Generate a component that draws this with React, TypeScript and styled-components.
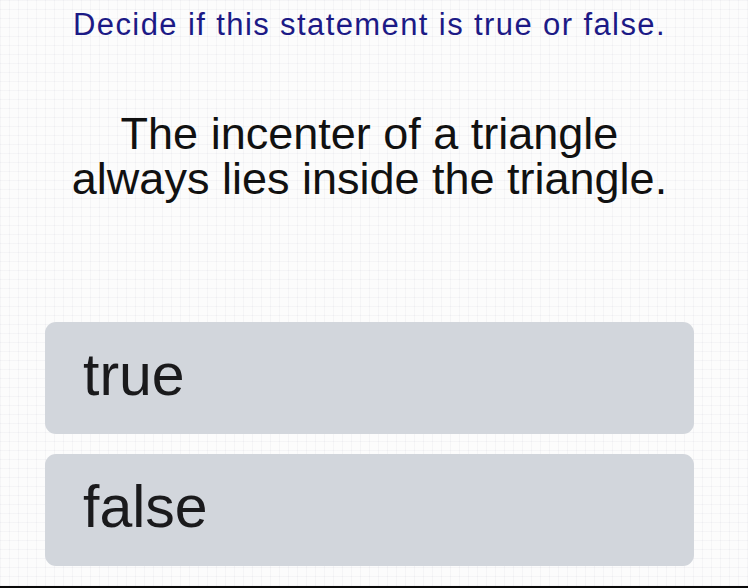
import styled, { createGlobalStyle } from "styled-components";

const GlobalStyle = createGlobalStyle`
  html, body {
    margin: 0;
    padding: 0;
    background: #ffffff;
  }
  * {
    box-sizing: border-box;
  }
`;

const Page = styled.div`
  width: 748px;
  height: 588px;
  display: flex;
  flex-direction: column;
  padding: 7px 54px 0 45px;
  border-bottom: 2px solid #0a0a0a;
  font-family: "Liberation Sans", Arial, sans-serif;
  background-color: #fcfcfc;
  background-image: linear-gradient(
      to right,
      rgba(200, 200, 210, 0.13) 1px,
      transparent 1px
    ),
    linear-gradient(to bottom, rgba(200, 200, 210, 0.13) 1px, transparent 1px);
  background-size: 9px 9px;
`;

const Instruction = styled.h2`
  margin: 0;
  font-size: 31px;
  line-height: 36px;
  font-weight: 400;
  letter-spacing: 1.4px;
  color: #1c1a86;
  text-align: center;
`;

const Statement = styled.p`
  margin: 68px 0 0;
  font-size: 45px;
  line-height: 45px;
  color: #111111;
  text-align: center;
`;

const Choices = styled.div`
  margin-top: 121px;
  display: flex;
  flex-direction: column;
  gap: 20px;
`;

const Choice = styled.button`
  height: 112px;
  display: flex;
  align-items: center;
  padding: 0 0 6px 38px;
  border: none;
  border-radius: 11px;
  background: #d2d6dc;
  color: #1a1a1c;
  font-family: "Liberation Sans", Arial, sans-serif;
  font-size: 59px;
  line-height: 59px;
  text-align: left;
  cursor: pointer;
`;

const options = ["true", "false"];

function App() {
  return (
    <>
      <GlobalStyle />
      <Page>
        <Instruction>Decide if this statement is true or false.</Instruction>
        <Statement>
          The incenter of a triangle
          <br />
          always lies inside the triangle.
        </Statement>
        <Choices>
          {options.map((option) => (
            <Choice key={option}>{option}</Choice>
          ))}
        </Choices>
      </Page>
    </>
  );
}

export default App;
